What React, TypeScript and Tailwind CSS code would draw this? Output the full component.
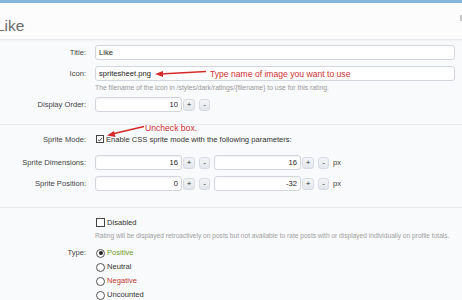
import React from "react";

function NumberBox({ value }: { value: string }) {
  return (
    <div className="flex items-center">
      <div className="w-[87px] h-[15px] rounded-[3px] border border-[#d3d6de] bg-white shadow-[inset_0_1px_2px_rgba(0,0,0,0.06)] flex items-center justify-end pr-[3px] text-[#222]">
        {value}
      </div>
      <button className="ml-[1px] w-[12px] h-[12px] rounded-[3px] border border-[#d8dbe3] bg-gradient-to-b from-[#f4f5f8] to-[#e3e6ec] text-[#333] text-[8px] leading-none flex items-center justify-center">
        +
      </button>
      <button className="ml-[4px] w-[11px] h-[12px] rounded-[3px] border border-[#d8dbe3] bg-gradient-to-b from-[#f4f5f8] to-[#e3e6ec] text-[#333] text-[8px] leading-none flex items-center justify-center">
        -
      </button>
    </div>
  );
}

function Row({ label, className, children }: { label?: string; className?: string; children: React.ReactNode }) {
  return (
    <div className={`flex items-center ${className ?? ""}`}>
      <div className="w-[87px] pr-[1px] text-right text-[#444] shrink-0">{label}</div>
      <div className="ml-[8px] flex items-center">{children}</div>
    </div>
  );
}

function Radio({ checked }: { checked?: boolean }) {
  return (
    <span className="w-[9px] h-[9px] rounded-full border border-[#555] bg-white flex items-center justify-center mr-[2px]">
      {checked && <span className="w-[4px] h-[4px] rounded-full bg-[#222]" />}
    </span>
  );
}

export default function App() {
  return (
    <div className="relative w-[462px] h-[300px] overflow-hidden bg-[#f9fafc] font-['Liberation_Sans',Arial,sans-serif] text-[7.6px]">
      <div className="h-[3px] bg-[#84b5de]" />
      {/* Header */}
      <div className="h-[37px] bg-[#fcfcfd] border-b border-[#e6e8ee] shadow-[0_1px_2px_rgba(0,0,0,0.04)] flex items-center">
        <h1 className="-ml-[4px] mt-[10px] text-[15.5px] text-[#6b6b6b]">Like</h1>
        <div className="ml-auto mt-[-6px] w-[2px] h-[6px] bg-[#c8c8c8]" />
      </div>

      {/* Form */}
      <div className="pt-[5px]">
        <Row label="Title:" className="h-[15px]">
          <div className="w-[360px] h-[15px] rounded-[3px] border border-[#d3d6de] bg-white flex items-center pl-[3px] text-[#222]">
            Like
          </div>
        </Row>
        <Row label="Icon:" className="h-[15px] mt-[6px]">
          <div className="w-[360px] h-[15px] rounded-[3px] border border-[#d3d6de] bg-white flex items-center pl-[3px] text-[#222]">
            spritesheet.png
          </div>
        </Row>
        <div className="ml-[95px] mt-[2px] h-[10px] flex items-center text-[6.8px] text-[#999]">
          The filename of the icon in /styles/dark/ratings/{"{filename}"} to use for this rating.
        </div>
        <Row label="Display Order:" className="h-[15px] mt-[4px]">
          <NumberBox value="10" />
        </Row>

        <div className="mt-[12px] border-t border-[#e7e9ef]" />

        <Row label="Sprite Mode:" className="h-[15px] mt-[7px]">
          <span className="w-[8px] h-[8px] border border-[#444] bg-white flex items-center justify-center mr-[2px] ml-[1px]">
            <svg viewBox="0 0 8 8" className="w-[7px] h-[7px]">
              <path d="M1.3 4.2 L3.2 6 L6.8 1.6" fill="none" stroke="#222" strokeWidth="1.1" />
            </svg>
          </span>
          <span className="text-[#333]">Enable CSS sprite mode with the following parameters:</span>
        </Row>
        <Row label="Sprite Dimensions:" className="h-[15px] mt-[8px]">
          <NumberBox value="16" />
          <div className="ml-[4px]">
            <NumberBox value="16" />
          </div>
          <span className="ml-[4px] text-[#444]">px</span>
        </Row>
        <Row label="Sprite Position:" className="h-[15px] mt-[6px]">
          <NumberBox value="0" />
          <div className="ml-[4px]">
            <NumberBox value="-32" />
          </div>
          <span className="ml-[4px] text-[#444]">px</span>
        </Row>

        <div className="mt-[16px] border-t border-[#e7e9ef]" />

        <Row className="h-[13px] mt-[8px]">
          <span className="w-[9px] h-[9px] border border-[#444] bg-white mr-[2px] ml-[1px]" />
          <span className="text-[#333]">Disabled</span>
        </Row>
        <div className="ml-[95px] mt-[2px] h-[10px] flex items-center text-[6.6px] text-[#a0a0a0] whitespace-nowrap">
          Rating will be displayed retroactively on posts but not available to rate posts with or displayed individually on profile totals.
        </div>
        <div className="flex mt-[5px]">
          <div className="w-[87px] pr-[1px] text-right text-[#444] h-[13px] flex items-center justify-end">Type:</div>
          <div className="ml-[9px] flex flex-col">
            <div className="h-[14px] flex items-center text-[#6c9c25]">
              <Radio checked />
              Positive
            </div>
            <div className="h-[14px] flex items-center text-[#333]">
              <Radio />
              Neutral
            </div>
            <div className="h-[14px] flex items-center text-[#c0392b]">
              <Radio />
              Negative
            </div>
            <div className="h-[14px] flex items-center text-[#333]">
              <Radio />
              Uncounted
            </div>
          </div>
        </div>
      </div>

      {/* Annotations */}
      <svg className="absolute left-0 top-0 pointer-events-none" width="462" height="300">
        <line x1="206" y1="71.5" x2="160" y2="74" stroke="#d42a2a" strokeWidth="1.6" />
        <path d="M155 74 L163 71 L163 77 Z" fill="#d42a2a" />
        <line x1="144" y1="126.5" x2="112" y2="134" stroke="#d42a2a" strokeWidth="1.6" />
        <path d="M107 135.5 L114 131 L115.5 137 Z" fill="#d42a2a" />
      </svg>
      <div className="absolute left-[210px] top-[68px] text-[8.6px] text-[#cc2f2f]">Type name of image you want to use</div>
      <div className="absolute left-[145px] top-[122px] text-[8.6px] text-[#cc2f2f]">Uncheck box.</div>
    </div>
  );
}
